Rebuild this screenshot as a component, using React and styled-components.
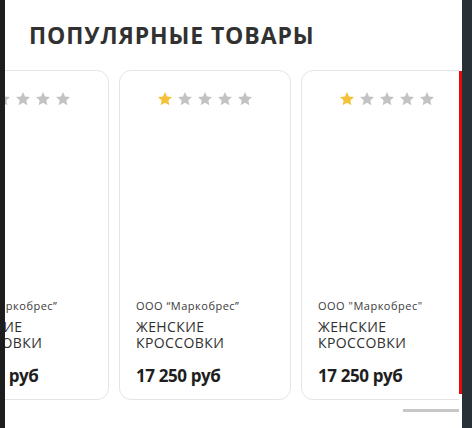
import React from "react";
import styled, { createGlobalStyle } from "styled-components";

const GlobalStyle = createGlobalStyle`
  html, body {
    margin: 0;
    padding: 0;
    background: #ffffff;
  }
  body {
    font-family: "Open Sans", "Liberation Sans", sans-serif;
    color: #2f2f2f;
  }
`;

const Screen = styled.div`
  display: flex;
  width: 472px;
  height: 428px;
  overflow: hidden;
`;

const LeftEdge = styled.div`
  width: 5px;
  flex-shrink: 0;
  background: #1d1d1d;
`;

const RightEdge = styled.div`
  width: 10px;
  flex-shrink: 0;
  background: #273036;
`;

const Panel = styled.section`
  flex: 1;
  min-width: 0;
  display: flex;
  flex-direction: column;
  background: #fff;
`;

const Title = styled.h2`
  margin: 21px 0 0 24px;
  font-size: 23px;
  line-height: 28px;
  font-weight: 700;
  letter-spacing: 0.9px;
  color: #313131;
`;

const Viewport = styled.div`
  margin-top: 21px;
  overflow: hidden;
`;

const Track = styled.div`
  display: flex;
  gap: 10px;
  transform: translateX(-68px);
`;

const Card = styled.article`
  flex: 0 0 172px;
  height: 330px;
  box-sizing: border-box;
  border: 1px solid #e4e4e4;
  border-radius: 12px;
  padding: 20px 16px 13px;
  display: flex;
  flex-direction: column;
`;

const Stars = styled.div`
  display: flex;
  justify-content: center;
  gap: 4px;
`;

const Picture = styled.div`
  flex: 1;
`;

const Vendor = styled.div`
  font-size: 11px;
  line-height: 14px;
  font-weight: 400;
  letter-spacing: 0.5px;
  color: #3a3a3a;
`;

const Name = styled.div`
  margin-top: 6px;
  font-size: 14px;
  line-height: 16px;
  font-weight: 400;
  letter-spacing: 0.4px;
  color: #2f2f2f;
  text-transform: uppercase;
`;

const Price = styled.div`
  margin-top: 15px;
  font-size: 17px;
  line-height: 20px;
  font-weight: 700;
  letter-spacing: -0.4px;
  color: #1e1e1e;
`;

const RedRail = styled.div`
  width: 3px;
  flex-shrink: 0;
  margin: 71px 0 34px;
  background: #e60b0b;
`;

const Body = styled.div`
  display: flex;
  flex: 1;
  min-height: 0;
`;

const Column = styled.div`
  flex: 1;
  min-width: 0;
  display: flex;
  flex-direction: column;
`;

const ScrollBar = styled.div`
  display: flex;
  justify-content: flex-end;
  margin-top: 9px;
`;

const Thumb = styled.div`
  width: 56px;
  height: 3px;
  background: #c6c6c6;
`;

function Star({ filled }) {
  return (
    <svg width="16" height="16" viewBox="0 0 24 24">
      <polygon
        points="12,1.5 15.1,8.3 22.5,9.1 17,14.1 18.5,21.5 12,17.8 5.5,21.5 7,14.1 1.5,9.1 8.9,8.3"
        fill={filled ? "#f3c13a" : "#c3c3c3"}
      />
    </svg>
  );
}

const products = [
  { vendor: "ООО “Маркобрес”", price: "17 250 руб", rating: 1 },
  { vendor: "ООО “Маркобрес”", price: "17 250 руб", rating: 1 },
  { vendor: "ООО \"Маркобрес\"", price: "17 250 руб", rating: 1 },
];

export default function App() {
  return (
    <>
      <GlobalStyle />
      <Screen>
        <LeftEdge />
        <Panel>
          <Body>
            <Column>
              <Title>ПОПУЛЯРНЫЕ ТОВАРЫ</Title>
              <Viewport>
                <Track>
                  {products.map((p, i) => (
                    <Card key={i}>
                      <Stars>
                        {[0, 1, 2, 3, 4].map((s) => (
                          <Star key={s} filled={s < p.rating} />
                        ))}
                      </Stars>
                      <Picture />
                      <Vendor>{p.vendor}</Vendor>
                      <Name>
                        Женские
                        <br />
                        кроссовки
                      </Name>
                      <Price>{p.price}</Price>
                    </Card>
                  ))}
                </Track>
              </Viewport>
              <ScrollBar>
                <Thumb />
              </ScrollBar>
            </Column>
            <RedRail />
          </Body>
        </Panel>
        <RightEdge />
      </Screen>
    </>
  );
}
